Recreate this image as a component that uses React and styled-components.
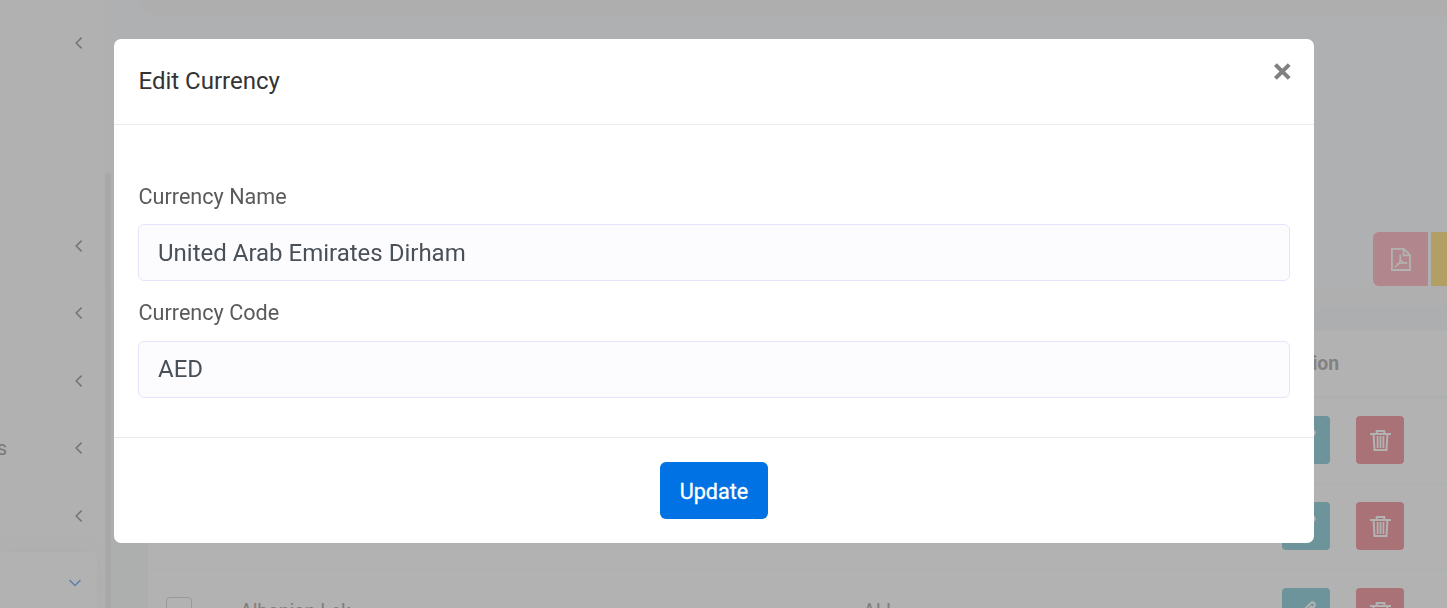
import React from "react";
import styled, { createGlobalStyle } from "styled-components";

const Global = createGlobalStyle`
  * { box-sizing: border-box; }
  html, body { margin: 0; height: 100%; overflow: hidden; }
  body { font-family: Roboto, "Liberation Sans", sans-serif; background: #fbfdff; }
  svg { display: block; }
`;

const Shell = styled.div`
  display: flex;
  width: 100%;
  height: 608px;
  overflow: hidden;
`;

const Sidebar = styled.aside`
  flex: 0 0 105px;
  background: #fefefe;
  padding-top: 9px;
  overflow: hidden;
`;

const NavItem = styled.div`
  display: flex;
  align-items: center;
  justify-content: space-between;
  height: ${(p) => p.$height || 67.5}px;
  padding-right: 22px;
  margin-bottom: ${(p) => p.$gap || 0}px;
  font-size: 20px;
  color: #aeaeae;
`;

const ActiveItem = styled(NavItem)`
  width: 97px;
  height: 62px;
  margin-top: 2px;
  padding-right: 16px;
  border-radius: 4px;
  background: #ffffff;
  box-shadow: 0 0 30px rgba(0, 0, 0, 0.035);
`;

const NavText = styled.span`
  width: 7px;
  display: flex;
  justify-content: flex-end;
`;

const ScrollTrack = styled.div`
  flex: 0 0 6px;
  margin-top: 173px;
  border-radius: 3px 3px 0 0;
  background: #f1f1f1;
`;

const Main = styled.main`
  flex: 1;
  min-width: 0;
  background: #fbfdff;
  display: flex;
  flex-direction: column;
`;

const TopBand = styled.div`
  flex: 0 0 17px;
  margin-left: 28px;
  border-radius: 0 0 0 60px;
  background: linear-gradient(#f9f9fb, #fbfbfb);
`;

const Toolbar = styled.div`
  display: flex;
  justify-content: flex-end;
  gap: 3px;
  flex: 0 0 269px;
  padding-top: 215px;
`;

const ExportButton = styled.div`
  width: ${(p) => p.$width}px;
  height: 54px;
  background: ${(p) => p.$color};
  border-radius: ${(p) => (p.$first ? "6px 0 0 6px" : "0")};
  display: flex;
  align-items: center;
  justify-content: center;
`;

const CardFoot = styled.div`
  flex: 0 0 21px;
  background: #fbfbfb;
`;

const Gap = styled.div`
  flex: 0 0 24px;
  background: #f8fafb;
`;

const TableArea = styled.div`
  flex: 1 0 auto;
  padding-left: 37px;
  background: #f8fafa;
`;

const Row = styled.div`
  display: grid;
  grid-template-columns: 92px 623px 419px 74px 1fr;
  align-items: center;
  height: ${(p) => p.$height}px;
  padding-bottom: 1px;
  background: #ffffff;
  border-bottom: ${(p) => (p.$head ? 2 : 1)}px solid #f8f9fa;
  font-size: 19.4px;
  line-height: 24px;
  color: #b5b5b5;
`;

const HeadCell = styled.span`
  grid-column: 4 / 6;
  padding: 2px 0 0 0.5px;
  font-weight: 700;
  color: #bababa;
`;

const Cell = styled.span`
  padding-bottom: 1px;
`;

const Check = styled.span`
  width: 26px;
  height: 26px;
  margin: 0 0 4px 18px;
  border: 1px solid #dcdcdc;
  border-radius: 4px;
`;

const ActionButton = styled.div`
  width: 48px;
  height: 48px;
  border-radius: 4px;
  background: ${(p) => p.$color};
  display: flex;
  align-items: center;
  justify-content: center;
`;

const Backdrop = styled.div`
  position: fixed;
  inset: 0;
  display: flex;
  justify-content: center;
  align-items: flex-start;
  padding: 39px 19px 0 0;
  background: rgba(0, 0, 0, 0.3);
`;

const Dialog = styled.section`
  width: 1200px;
  height: 504px;
  border-radius: 7px;
  background: #ffffff;
  display: flex;
  flex-direction: column;
`;

const DialogHeader = styled.header`
  height: 86px;
  display: flex;
  justify-content: space-between;
  align-items: flex-start;
  padding: 24px 23px 0 24.5px;
  border-bottom: 1px solid #e9ecef;
`;

const Title = styled.h5`
  margin: 0;
  font-size: 24px;
  line-height: 36px;
  font-weight: 400;
  color: #333333;
`;

const Close = styled.button`
  padding: 0;
  border: 0;
  background: none;
`;

const DialogBody = styled.div`
  flex: 1;
  display: flex;
  flex-direction: column;
  padding: 54px 24px 0;
`;

const Field = styled.div`
  display: flex;
  flex-direction: column;
  height: ${(p) => p.$height}px;
`;

const Label = styled.label`
  height: ${(p) => p.$height}px;
  padding-left: 0.5px;
  font-size: 21.6px;
  line-height: 35px;
  color: #5a5a5a;
`;

const Input = styled.input`
  width: 100%;
  height: 57px;
  padding: 0 19px ${(p) => p.$lift || 0}px;
  border: 1px solid #e4e4fb;
  border-radius: 6px;
  outline: none;
  background: #fcfcff;
  font-family: inherit;
  font-size: 24px;
  color: #495057;
`;

const DialogFooter = styled.footer`
  height: 106px;
  display: flex;
  align-items: flex-start;
  justify-content: center;
  padding-top: 24px;
  border-top: 1px solid #e9e9e9;
`;

const UpdateButton = styled.button`
  width: 108px;
  height: 57px;
  padding: 2px 0 0;
  border: 0;
  border-radius: 6px;
  background: #0072e3;
  color: #ffffff;
  font-family: inherit;
  font-size: 21.6px;
  -webkit-text-stroke: 0.3px #ffffff;
`;

const ChevronLeft = () => (
  <svg width="8" height="12" viewBox="0 0 8 12" fill="none" stroke="#a6a6a6" strokeWidth="1.5">
    <path d="M6.6 .6L1.2 6l5.4 5.4" />
  </svg>
);

const ChevronDown = () => (
  <svg width="12" height="8" viewBox="0 0 12 8" fill="none" stroke="#86b9f5" strokeWidth="1.6">
    <path d="M.5 1.2L6 6.5l5.5-5.3" />
  </svg>
);

const PdfIcon = () => (
  <svg width="20" height="23" viewBox="0 0 20 23" fill="none" stroke="#ffffff" strokeWidth="1.8">
    <path d="M.9 .9H13L19 7v15H.9zM12.6 1v6.4H19" />
    <path d="M9.3 6.5v5c-.4 3-2.6 6.2-5.6 7.4M9.4 11.5c1 2.2 3 4 6.8 3.9M5.6 16.3c3-1.2 6-1.9 10.4-1.5" strokeWidth="1.5" />
  </svg>
);

const TrashIcon = () => (
  <svg width="21" height="21" viewBox="0 0 21 21" fill="none" stroke="#ffffff" strokeWidth="2">
    <path d="M0 4h21M6.7 3.5V1h7.6v2.5M3.6 5l.9 15h12l.9-15" />
    <path d="M7.6 6v12M10.5 6v12M13.4 6v12" strokeWidth="1.8" />
  </svg>
);

const PencilIcon = () => (
  <svg width="22" height="22" viewBox="0 0 22 22" fill="none" stroke="#ffffff" strokeWidth="2">
    <path d="M2 20l1-5.5L15.8 2.2a2.2 2.2 0 0 1 3.4 3.2L7 18.5zM5 17L17 5" />
  </svg>
);

const CloseIcon = () => (
  <svg width="18" height="17" viewBox="0 0 18 17" fill="none" stroke="#808080" strokeWidth="4">
    <path d="M2.4 1.6l13.8 13.8M16.2 1.6L2.4 15.4" />
  </svg>
);

const TableRow = ({ name, code }) => (
  <Row $height={86}>
    <Check />
    <Cell>{name}</Cell>
    <Cell>{code}</Cell>
    <ActionButton $color="#9cd5dd"><PencilIcon /></ActionButton>
    <ActionButton $color="#f1a4ab"><TrashIcon /></ActionButton>
  </Row>
);

export default function App() {
  return (
    <>
      <Global />
      <Shell>
        <Sidebar>
          <NavItem $gap={135.5}><NavText /><ChevronLeft /></NavItem>
          <NavItem><NavText /><ChevronLeft /></NavItem>
          <NavItem><NavText /><ChevronLeft /></NavItem>
          <NavItem><NavText /><ChevronLeft /></NavItem>
          <NavItem><NavText>s</NavText><ChevronLeft /></NavItem>
          <NavItem><NavText /><ChevronLeft /></NavItem>
          <ActiveItem><NavText /><ChevronDown /></ActiveItem>
        </Sidebar>
        <ScrollTrack />
        <Main>
          <TopBand />
          <Toolbar>
            <ExportButton $width={55} $color="#ffc1cb" $first><PdfIcon /></ExportButton>
            <ExportButton $width={16} $color="#ffe48f" />
          </Toolbar>
          <CardFoot />
          <Gap />
          <TableArea>
            <Row $height={67} $head><HeadCell>Action</HeadCell></Row>
            <TableRow />
            <TableRow />
            <TableRow name="Albanian Lek" code="ALL" />
          </TableArea>
        </Main>
      </Shell>
      <Backdrop>
        <Dialog>
          <DialogHeader>
            <Title>Edit Currency</Title>
            <Close aria-label="Close"><CloseIcon /></Close>
          </DialogHeader>
          <DialogBody>
            <Field $height={116}>
              <Label $height={45}>Currency Name</Label>
              <Input defaultValue="United Arab Emirates Dirham" />
            </Field>
            <Field $height={103}>
              <Label $height={46}>Currency Code</Label>
              <Input defaultValue="AED" $lift={2} />
            </Field>
          </DialogBody>
          <DialogFooter>
            <UpdateButton>Update</UpdateButton>
          </DialogFooter>
        </Dialog>
      </Backdrop>
    </>
  );
}
